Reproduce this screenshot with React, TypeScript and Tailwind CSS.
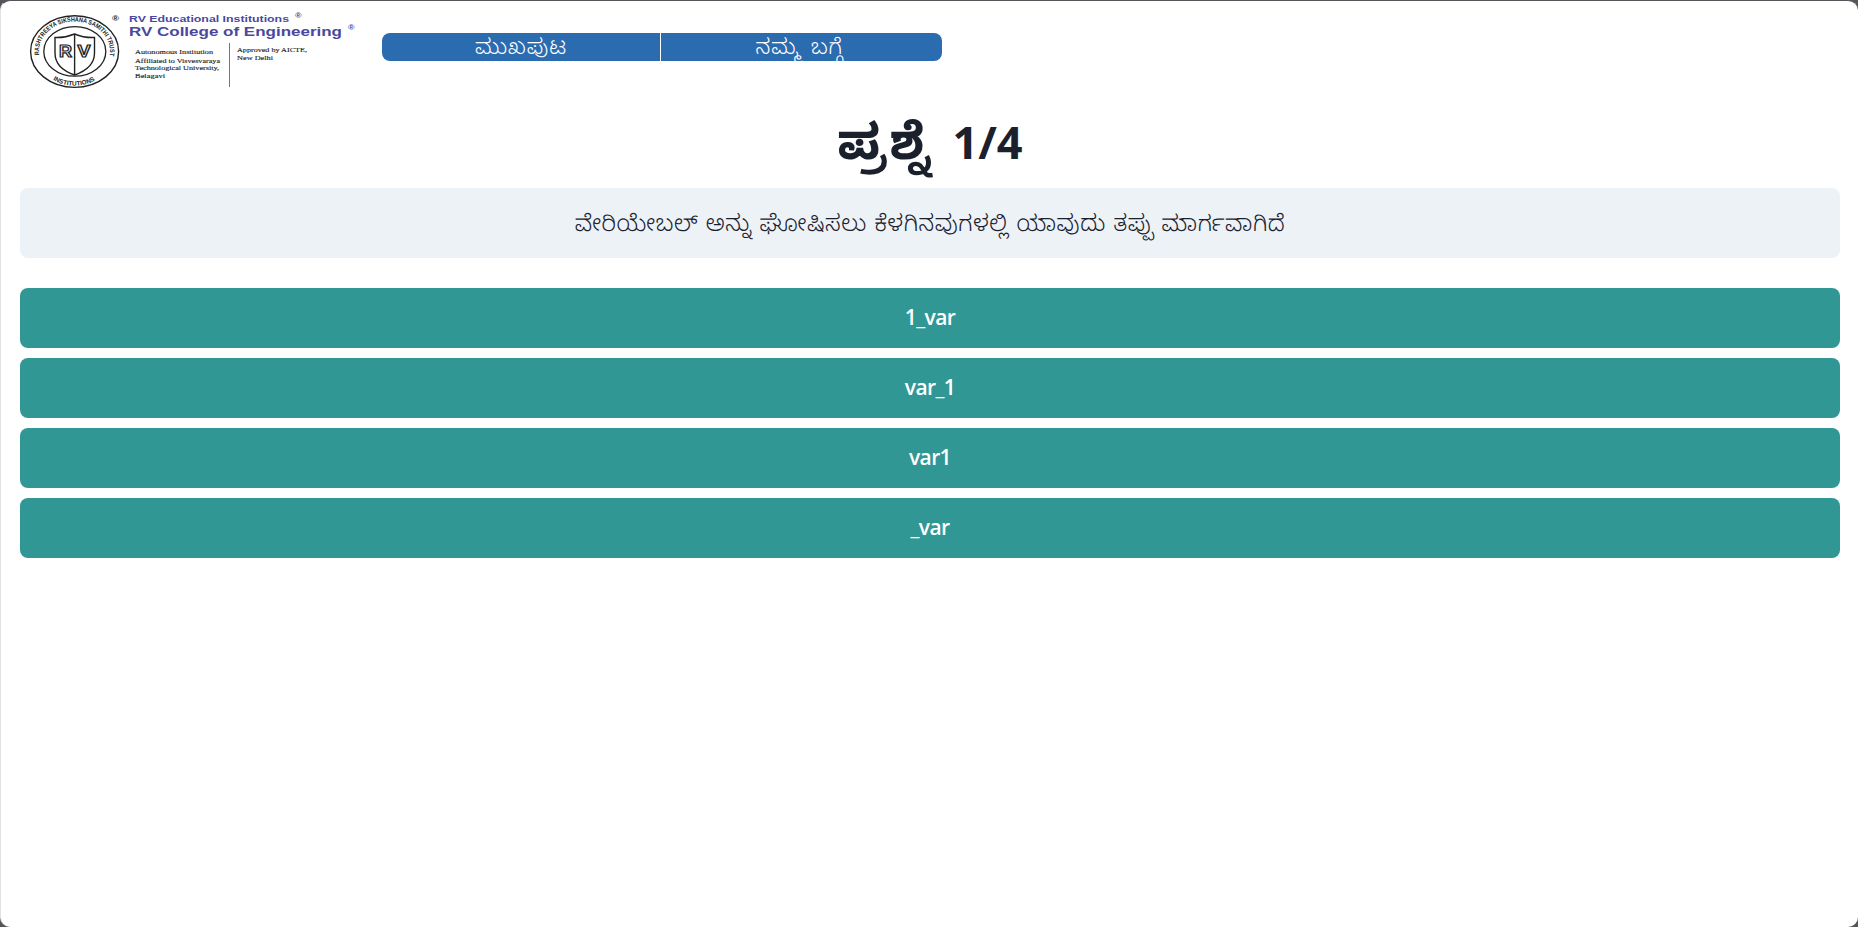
const options = ['1_var', 'var_1', 'var1', '_var'];

function Logo() {
  return (
    <svg width="362" height="94" viewBox="0 0 362 94" className="block shrink-0">
      <defs>
        <path id="arc-top" d="M40 58 A35.5 29.5 0 1 1 109 58" />
        <path id="arc-bottom" d="M44 72 A36.5 30.5 0 0 0 105 72" />
      </defs>
      <g fill="none" stroke="#222" strokeWidth="1.4">
        <ellipse cx="74.6" cy="51.6" rx="44" ry="35.8" />
        <ellipse cx="74.8" cy="51.4" rx="31" ry="24.8" strokeWidth="1.3" />
        <path d="M55 37.5 Q65 38 74.6 34 Q84 38 94.5 37.5 V53 C94.5 64 86 71 74.6 75 C63 71 55 64 55 53 Z" />
        <path d="M74.6 34 V75" />
      </g>
      <g fontFamily="Liberation Sans, sans-serif" fontWeight="700" fill="#222">
        <text fontSize="6.5">
          <textPath href="#arc-top" startOffset="3" textLength="111" lengthAdjust="spacingAndGlyphs">RASHTREEYA SIKSHANA SAMITHI TRUST</textPath>
        </text>
        <text fontSize="6.5">
          <textPath href="#arc-bottom" startOffset="12" textLength="44" lengthAdjust="spacingAndGlyphs">INSTITUTIONS</textPath>
        </text>
        <g fontSize="16" fill="#fff" stroke="#222" strokeWidth="1.2">
          <text x="59" y="56.5" textLength="13" lengthAdjust="spacingAndGlyphs">R</text>
          <text x="77.5" y="56.5" textLength="13" lengthAdjust="spacingAndGlyphs">V</text>
        </g>
        <text x="112" y="21" fontSize="7.5" textLength="7" lengthAdjust="spacingAndGlyphs">®</text>
      </g>
      <g fontFamily="Liberation Sans, sans-serif" fontWeight="700" fill="#4a489e">
        <text x="129" y="22" fontSize="9.3" textLength="160" lengthAdjust="spacingAndGlyphs">RV Educational Institutions</text>
        <text x="129" y="35.7" fontSize="12.4" textLength="213" lengthAdjust="spacingAndGlyphs">RV College of Engineering</text>
        <text x="295" y="18" fontSize="6.5" textLength="6.5" lengthAdjust="spacingAndGlyphs">®</text>
        <text x="348" y="30" fontSize="6.5" textLength="6.5" lengthAdjust="spacingAndGlyphs">®</text>
      </g>
      <g fontFamily="Liberation Serif, serif" fontSize="6.8" fill="#222" stroke="#222" strokeWidth="0.12">
        <text x="135" y="54.3" textLength="78" lengthAdjust="spacingAndGlyphs">Autonomous Institution</text>
        <text x="135" y="62.5" textLength="85" lengthAdjust="spacingAndGlyphs">Affiliated to Visvesvaraya</text>
        <text x="135" y="70.2" textLength="84" lengthAdjust="spacingAndGlyphs">Technological University,</text>
        <text x="135" y="78.2" textLength="30" lengthAdjust="spacingAndGlyphs">Belagavi</text>
        <text x="237" y="52.1" textLength="70" lengthAdjust="spacingAndGlyphs">Approved by AICTE,</text>
        <text x="237" y="60.1" textLength="36" lengthAdjust="spacingAndGlyphs">New Delhi</text>
      </g>
      <path d="M229.5 43 V87" stroke="#777" strokeWidth="1" />
    </svg>
  );
}

export default function App() {
  return (
    <div className="h-[927px] bg-[#55545a]">
      <div className="h-full overflow-hidden rounded-[10px] border-t border-l border-t-[#55545a] border-l-[#e2e2e2] bg-white font-['Open_Sans','Noto_Sans_Kannada',sans-serif] text-[#1a202c]">
        <header className="-mt-px -ml-px flex h-[94px] items-center">
          <Logo />
          <nav className="ml-5 flex h-7 w-[560px] overflow-hidden rounded-lg bg-[#2b6cb0] text-[21.5px] leading-[26px] font-light tracking-[0.9px] text-white">
            <a className="flex w-[279px] items-start justify-center border-r border-white">
              <span>ಮುಖಪುಟ</span>
            </a>
            <a className="flex flex-1 items-start justify-center pr-1 [word-spacing:3px]">
              <span>ನಮ್ಮ ಬಗ್ಗೆ</span>
            </a>
          </nav>
        </header>
        <main className="pr-[18px] pl-[19px] text-center">
          <h1 className="flex h-[94px] items-baseline justify-center gap-[19px] pt-4 leading-[60px] font-bold">
            <span className="text-[49.5px] tracking-[3px]">ಪ್ರಶ್ನೆ</span>
            <span className="text-[45px]">1/4</span>
          </h1>
          <p className="flex h-[70px] items-center justify-center rounded-lg bg-[#edf2f7] text-[22.7px] leading-[30px] font-light tracking-[0.65px] [word-spacing:1px]">
            ವೇರಿಯೇಬಲ್ ಅನ್ನು ಘೋಷಿಸಲು ಕೆಳಗಿನವುಗಳಲ್ಲಿ ಯಾವುದು ತಪ್ಪು ಮಾರ್ಗವಾಗಿದೆ
          </p>
          <div className="mt-[30px] flex flex-col gap-2.5">
            {options.map((option) => (
              <button key={option} className="h-[60px] rounded-lg bg-[#319795] text-[21px] font-semibold tracking-[-0.6px] text-white">
                {option}
              </button>
            ))}
          </div>
        </main>
      </div>
    </div>
  );
}
